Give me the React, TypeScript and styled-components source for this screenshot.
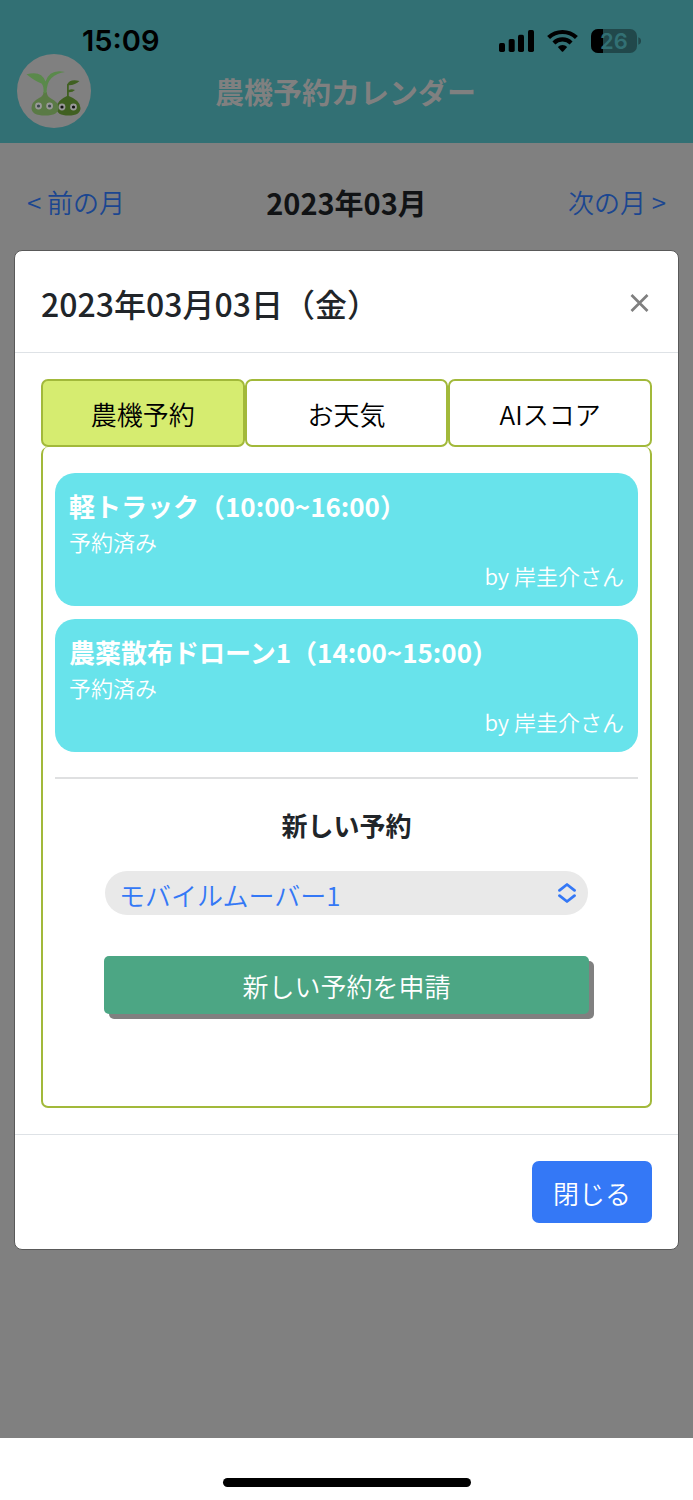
import React, { useState } from "react";
import styled, { createGlobalStyle } from "styled-components";

const GlobalStyle = createGlobalStyle`
  *, *::before, *::after { box-sizing: border-box; }
  body {
    margin: 0;
    background: #808080;
    color: #212529;
    font-family: "Noto Sans CJK JP", "Noto Sans", sans-serif;
    font-size: 26px;
    line-height: 38px;
    font-weight: 350;
  }
  h1, h2, h3, p { margin: 0; }
  button, select { font: inherit; }
`;

const Page = styled.div`
  min-height: 100vh;
  display: flex;
  flex-direction: column;
`;

const AppHeader = styled.header`
  background: #327074;
  padding-bottom: 15px;
`;

const StatusBar = styled.div`
  height: 54px;
  padding: 28px 52px 0 82px;
  display: flex;
  justify-content: space-between;
  align-items: center;
`;

const Clock = styled.time`
  font-family: Inter, sans-serif;
  font-weight: 600;
  font-size: 29px;
  line-height: 26px;
  color: #000;
`;

const StatusIcons = styled.div`
  display: flex;
  align-items: center;
  gap: 13px;
`;

const BrandRow = styled.div`
  display: grid;
  grid-template-columns: 74px 1fr 74px;
  align-items: center;
  padding: 0 19px 0 17px;
`;

const AppTitle = styled.h1`
  text-align: center;
  color: #808080;
  font-size: 29px;
  font-weight: 700;
  line-height: 38px;
`;

const MonthNav = styled.nav`
  display: flex;
  justify-content: space-between;
  align-items: center;
  padding: 40px 27px 29px;
`;

const MonthLink = styled.a`
  color: #1b4690;
  text-decoration: none;
`;

const MonthTitle = styled.h2`
  font-size: 29px;
  font-weight: 700;
  line-height: 38px;
  color: #111315;
`;

const Main = styled.main`
  flex: 1;
  padding: 0 14px 32px;
`;

const Dialog = styled.section`
  background: #fff;
  border: 1px solid #595959;
  border-radius: 8px;
`;

const DialogHeader = styled.div`
  display: flex;
  justify-content: space-between;
  align-items: center;
  height: 102px;
  padding: 2px 26px 0;
  border-bottom: 1px solid #dee2e6;
`;

const DialogTitle = styled.h2`
  font-size: 32px;
  font-weight: 500;
  line-height: 48px;
`;

const IconButton = styled.button`
  display: flex;
  padding: 3px;
  border: 0;
  background: none;
  color: #7f7f7f;
  cursor: pointer;
`;

const DialogBody = styled.div`
  padding: 26px;
`;

const TabList = styled.div`
  display: grid;
  grid-template-columns: repeat(3, 1fr);
`;

const Tab = styled.button<{ $active: boolean }>`
  height: 68px;
  padding: 2px 0 0;
  border: 2px solid #a2b93a;
  border-radius: 7px;
  background: ${(p) => (p.$active ? "#d6ec70" : "#fff")};
  color: #000;
  cursor: pointer;
`;

const TabPanel = styled.div`
  border: 2px solid #a2b93a;
  border-top: 0;
  border-radius: 7px;
  padding: 26px 12px 92px;
`;

const ReservationList = styled.ul`
  list-style: none;
  margin: 0;
  padding: 0;
  display: grid;
  gap: 13px;
`;

const Reservation = styled.li`
  padding: 15px 14px 14px;
  border-radius: 20px;
  background: #68e3eb;
  color: #fff;
`;

const ReservationTitle = styled.h3`
  font-size: 26px;
  font-weight: 700;
  line-height: 36px;
`;

const ReservationText = styled.p<{ $end?: boolean }>`
  font-size: 22px;
  line-height: 34px;
  text-align: ${(p) => (p.$end ? "right" : "left")};
`;

const Divider = styled.hr`
  margin: 25px 0 27px;
  border: 0;
  border-top: 2px solid #dfe0e1;
`;

const FormTitle = styled.h3`
  font-size: 26px;
  font-weight: 700;
  line-height: 38px;
  text-align: center;
`;

const Form = styled.form`
  display: grid;
  gap: 41px;
  padding: 27px 49px 0;
`;

const SelectBox = styled.div`
  display: grid;
  align-items: center;
  padding: 0 1px;

  > * { grid-area: 1 / 1; }
  > svg {
    justify-self: end;
    margin-right: 12px;
    pointer-events: none;
  }
`;

const Select = styled.select`
  appearance: none;
  width: 100%;
  height: 44px;
  padding: 3px 48px 0 14px;
  border: 0;
  border-radius: 22px;
  background: #e9e9e9;
  color: #3478f6;
  line-height: 38px;
`;

const SubmitButton = styled.button`
  height: 58px;
  padding: 2px 0 0;
  border: 0;
  border-radius: 5px;
  background: #4ca684;
  box-shadow: 5px 5px 0 #808080;
  color: #fff;
  cursor: pointer;
`;

const DialogFooter = styled.div`
  display: flex;
  justify-content: flex-end;
  padding: 26px;
  border-top: 1px solid #dee2e6;
`;

const CloseButton = styled.button`
  height: 62px;
  padding: 2px 21px 0;
  border: 0;
  border-radius: 7px;
  background: #3478f6;
  color: #fff;
  cursor: pointer;
`;

const HomeArea = styled.footer`
  display: flex;
  justify-content: center;
  height: 62px;
  padding-top: 40px;
  background: #fff;
`;

const HomeIndicator = styled.div`
  width: 248px;
  height: 9px;
  border-radius: 5px;
  background: #000;
`;

const SignalIcon = () => (
  <svg width="35" height="24" viewBox="0 0 35 24" aria-hidden="true">
    <rect x="0" y="14" width="6" height="9" rx="1.7" />
    <rect x="9.7" y="10" width="6" height="13" rx="1.7" />
    <rect x="19" y="5.7" width="6" height="17.3" rx="1.7" />
    <rect x="29" y="1" width="6" height="22" rx="1.7" />
  </svg>
);

const WifiIcon = () => (
  <svg width="31" height="24" viewBox="0 0 31 24" aria-hidden="true">
    <g fill="none" stroke="#000" strokeWidth="4.2">
      <path d="M1.6 8.6a20 20 0 0 1 27.8 0" />
      <path d="M6.9 13.9a12.4 12.4 0 0 1 17.2 0" />
    </g>
    <path d="M10.8 18a6.8 6.8 0 0 1 9.4 0l-4 4.5q-.7.7-1.4 0z" />
  </svg>
);

const BatteryIcon = () => (
  <svg width="50" height="26" viewBox="0 0 50 26" role="img" aria-label="26%">
    <clipPath id="level"><rect width="12" height="26" /></clipPath>
    <rect x="0" y="1" width="46" height="24" rx="7" fill="#21484b" />
    <rect x="0" y="1" width="46" height="24" rx="7" clipPath="url(#level)" />
    <path d="M47.3 9.3q2.8 1 2.8 3.7t-2.8 3.7z" fill="#21484b" />
    <text x="23" y="21" textAnchor="middle" fill="#327074" fontFamily="Inter, sans-serif" fontWeight="600" fontSize="22">26</text>
  </svg>
);

const SproutLogo = () => (
  <svg width="74" height="74" viewBox="0 0 74 74" role="img" aria-label="ロゴ">
    <circle cx="37" cy="37" r="37" fill="#808080" />
    <path
      fill="#406021"
      d="M50 42V30.5Q53 24.5 62.500 27Q58.500 31 51.800 31.300V36Q54.500 34.500 58 36Q55.500 38.500 51.800 38.300V42Q63.500 46.500 63.500 54Q63.500 61.500 51.500 61.500T39.500 54Q39.500 46.500 50 42z"
    />
    <path
      fill="#5a7a45"
      d="M26.500 38h3.200Q30 42.500 34 44.500Q41.500 48 41.500 54Q41.500 61.500 28 61.500T14.500 54Q14.500 48 22 44Q26.500 42 26.500 38z"
    />
    <path
      fill="#5a894b"
      d="M26.500 39Q27 32 24.500 29.500Q17.500 27 9.500 20.300Q24.500 16 28.500 27.500Q33 14.500 48 18Q40 19 34.500 24Q29.500 29 29.500 39z"
    />
    <g fill="#3b474a" stroke="#999" strokeWidth="1.8">
      <circle cx="21.5" cy="52" r="2.5" />
      <circle cx="32.6" cy="52" r="2.5" />
      <circle cx="45" cy="53" r="2.5" fill="#111" />
      <circle cx="56.5" cy="53" r="2.5" fill="#111" />
    </g>
  </svg>
);

const CrossIcon = () => (
  <svg width="19" height="20" viewBox="0 0 19 20" fill="none" stroke="currentColor" strokeWidth="2.7" aria-hidden="true">
    <path d="M1.5 2 17.5 18M17.5 2 1.5 18" />
  </svg>
);

const ChevronsIcon = () => (
  <svg width="18" height="20" viewBox="0 0 18 20" fill="none" stroke="#3478f6" strokeWidth="2.8" strokeLinecap="round" strokeLinejoin="round" aria-hidden="true">
    <path d="M1.5 7.3 9 1.5l7.5 5.8M1.5 12.7 9 18.5l7.5-5.8" />
  </svg>
);

const tabs = ["農機予約", "お天気", "AIスコア"];

const reservations = [
  { name: "軽トラック", time: "10:00~16:00", user: "岸圭介" },
  { name: "農薬散布ドローン1", time: "14:00~15:00", user: "岸圭介" },
];

export default function App() {
  const [active, setActive] = useState(0);

  return (
    <>
      <GlobalStyle />
      <Page>
        <AppHeader>
          <StatusBar>
            <Clock>15:09</Clock>
            <StatusIcons>
              <SignalIcon />
              <WifiIcon />
              <BatteryIcon />
            </StatusIcons>
          </StatusBar>
          <BrandRow>
            <SproutLogo />
            <AppTitle>農機予約カレンダー</AppTitle>
          </BrandRow>
        </AppHeader>
        <MonthNav>
          <MonthLink href="#prev">&lt; 前の月</MonthLink>
          <MonthTitle>2023年03月</MonthTitle>
          <MonthLink href="#next">次の月 &gt;</MonthLink>
        </MonthNav>
        <Main>
          <Dialog role="dialog" aria-labelledby="dialog-title">
            <DialogHeader>
              <DialogTitle id="dialog-title">2023年03月03日（金）</DialogTitle>
              <IconButton type="button" aria-label="閉じる">
                <CrossIcon />
              </IconButton>
            </DialogHeader>
            <DialogBody>
              <TabList role="tablist">
                {tabs.map((label, i) => (
                  <Tab
                    key={label}
                    type="button"
                    role="tab"
                    aria-selected={i === active}
                    $active={i === active}
                    onClick={() => setActive(i)}
                  >
                    {label}
                  </Tab>
                ))}
              </TabList>
              <TabPanel role="tabpanel">
                <ReservationList>
                  {reservations.map((r) => (
                    <Reservation key={r.name}>
                      <ReservationTitle>{`${r.name}（${r.time}）`}</ReservationTitle>
                      <ReservationText>予約済み</ReservationText>
                      <ReservationText $end>{`by ${r.user}さん`}</ReservationText>
                    </Reservation>
                  ))}
                </ReservationList>
                <Divider />
                <FormTitle id="form-title">新しい予約</FormTitle>
                <Form onSubmit={(e) => e.preventDefault()}>
                  <SelectBox>
                    <Select aria-labelledby="form-title">
                      <option>モバイルムーバー1</option>
                    </Select>
                    <ChevronsIcon />
                  </SelectBox>
                  <SubmitButton type="submit">新しい予約を申請</SubmitButton>
                </Form>
              </TabPanel>
            </DialogBody>
            <DialogFooter>
              <CloseButton type="button">閉じる</CloseButton>
            </DialogFooter>
          </Dialog>
        </Main>
        <HomeArea>
          <HomeIndicator />
        </HomeArea>
      </Page>
    </>
  );
}
